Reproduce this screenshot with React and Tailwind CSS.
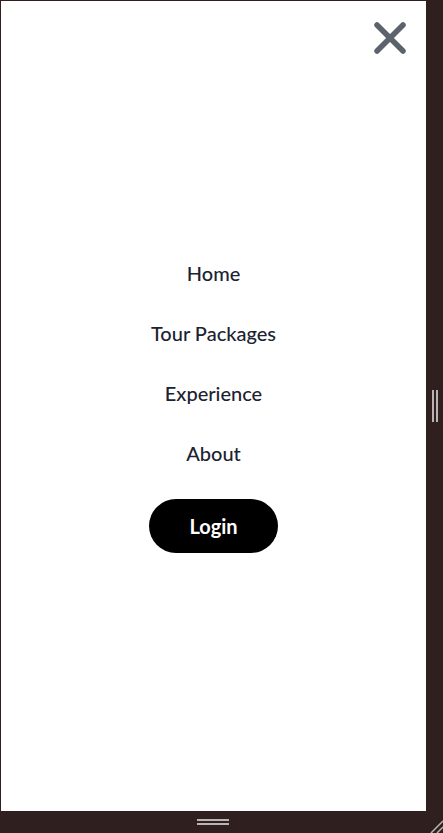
import React from 'react';

const links = ['Home', 'Tour Packages', 'Experience', 'About'];

// Close "X" in the top-right of the drawer
const CloseIcon = () => (
  <svg width="34" height="34" viewBox="0 0 34 34" fill="none">
    <path d="M4 4L30 30M30 4L4 30" stroke="#5d636c" strokeWidth="5.5" strokeLinecap="round" />
  </svg>
);

export default function App() {
  return (
    <div className="w-[443px] h-[833px] bg-[#2f201f] flex flex-col overflow-hidden" style={{ fontFamily: 'Lato, "Noto Sans", sans-serif' }}>
      <div className="flex">
        {/* Mobile menu panel */}
        <div className="ml-px mt-px w-[425px] h-[810px] bg-white flex flex-col">
          <div className="flex justify-end pr-[19px] h-0">
            <button className="w-[34px] h-[34px] mt-[20px]">
              <CloseIcon />
            </button>
          </div>
          <nav className="flex-1 flex flex-col items-center justify-center gap-8">
            {links.map((l) => (
              <a key={l} href="#" className="text-xl leading-7 font-medium text-[#1b2230]">
                {l}
              </a>
            ))}
            <button className="w-[129px] h-[54px] rounded-full bg-black text-white text-xl font-bold">
              Login
            </button>
          </nav>
        </div>
        {/* vertical resize grip */}
        <div className="flex-1 flex items-center justify-center">
          <div className="flex gap-[2px] h-[32px]">
            <div className="w-[2px] bg-[#b9b4b3]" />
            <div className="w-[2px] bg-[#b9b4b3]" />
          </div>
        </div>
      </div>
      {/* bottom resize grip */}
      <div className="flex-1 flex">
        <div className="w-[426px] flex items-center justify-center">
          <div className="flex flex-col gap-[2px] w-[32px]">
            <div className="h-[2px] bg-[#b9b4b3]" />
            <div className="h-[2px] bg-[#b9b4b3]" />
          </div>
        </div>
        <div className="flex-1 flex items-end justify-end">
          <svg width="14" height="14" viewBox="0 0 14 14">
            <path d="M2 14L14 2M8 14L14 8" stroke="#b9b4b3" strokeWidth="1.5" />
          </svg>
        </div>
      </div>
    </div>
  );
}
